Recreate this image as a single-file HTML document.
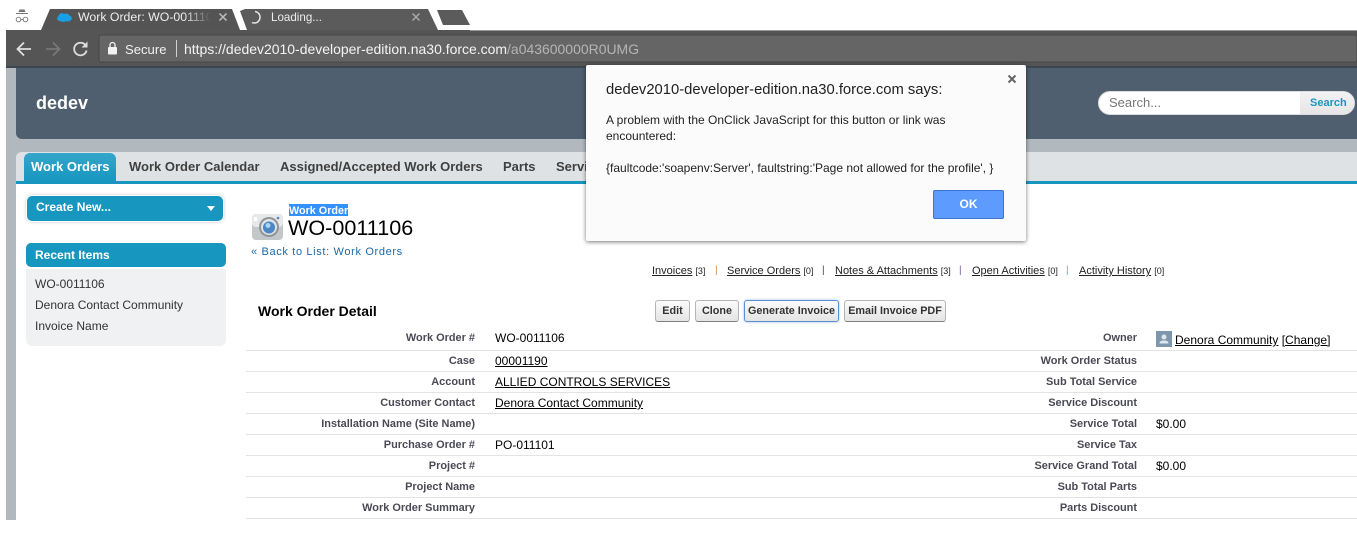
<!DOCTYPE html>
<html lang="en">
<head>
<meta charset="utf-8">
<title>Work Order: WO-0011106</title>
<style>
html,body{margin:0;padding:0;background:#fff}
body{width:1357px;height:540px;overflow:hidden;position:relative;font-family:"Liberation Sans",sans-serif;color:#000}
.a{position:absolute;white-space:nowrap}
.lb{position:absolute;right:882px;font-size:10.950px;font-weight:bold;color:#4a4a56;white-space:nowrap;line-height:14px}
.lb2{position:absolute;right:220px;font-size:10.950px;font-weight:bold;color:#4a4a56;white-space:nowrap;line-height:14px}
.v{position:absolute;font-size:12px;line-height:14px;white-space:nowrap;color:#000}
.v u,.rl u{text-underline-offset:1px}
.ln{position:absolute;left:246px;right:0;height:1px;background:#e3e3e3}
.rl{position:absolute;top:265px;font-size:11px;line-height:13px;color:#222;white-space:nowrap}
.rl small{font-size:9px}
.sep{position:absolute;top:265px;font-size:10px;line-height:12px}
.tab{position:absolute;top:159px;font-size:13px;font-weight:bold;color:#3f3f3f;line-height:16px;white-space:nowrap}
.btn{position:absolute;top:300px;height:22px;box-sizing:border-box;border:1px solid #b5b5b5;border-bottom-color:#7f7f7f;border-radius:3px;background:linear-gradient(#fbfbfb,#e4e4e4);font-size:10.800px;font-weight:bold;color:#333;text-align:center;line-height:21px;white-space:nowrap}
</style>
</head>
<body>
<!-- browser chrome -->
<svg class="a" style="left:0;top:0" width="1357" height="68" viewBox="0 0 1357 68">
  <rect x="6" y="30" width="1351" height="38" fill="#555"/>
  <path d="M41 30L50 9H232L240 30Z" fill="#545454"/>
  <path d="M240 11L245 9H428L438 30H247Z" fill="#5b5b5b"/>
  <path d="M437 10H462L470 25H443Z" fill="#5b5b5b"/>
  <rect x="470" y="30" width="887" height="1" fill="#9a9a9a"/>
  <rect x="99" y="35" width="1258" height="27" rx="2" fill="#656565" stroke="#474747"/>
  <rect x="6" y="66" width="1351" height="2" fill="#3d4650"/>
  <!-- incognito -->
  <path d="M19.500 9.500h5l1 2.500h-7z" fill="#777"/>
  <rect x="16" y="13" width="12" height="1" fill="#777"/>
  <circle cx="18.500" cy="19.500" r="2.300" fill="none" stroke="#777" stroke-width=".9"/>
  <circle cx="25.500" cy="19.500" r="2.300" fill="none" stroke="#777" stroke-width=".9"/>
  <path d="M20.800 19.500h2.400" stroke="#777" stroke-width=".9"/>
  <!-- salesforce cloud -->
  <path d="M60 21c-3 0-3.800-3.800-1.500-4.800.5-3 4-4 5.500-2 2-1.500 5-.6 5.500 1.500 2.800.2 3.300 4.200.5 5-1 .8-3 1.200-4.300.5-1.500 1-4 .8-5.700-.2z" fill="#18a0e5"/>
  <!-- tab close icons -->
  <path d="M219.500 13.500l7 7M226.500 13.500l-7 7" stroke="#bdbdbd" stroke-width="1.500"/>
  <path d="M412.500 13.500l7 7M419.500 13.500l-7 7" stroke="#a8a8a8" stroke-width="1.500"/>
  <!-- spinner -->
  <path d="M255 11.500a5.800 5.800 0 0 1 0 11.500a6 6 0 0 1-3-.5" fill="none" stroke="#e4e4e4" stroke-width="1.500"/>
  <!-- nav -->
  <path d="M31 49H18M24 42.500L17.500 49l6.500 6.500" fill="none" stroke="#e0e0e0" stroke-width="1.800"/>
  <path d="M46 49h13M53 42.500l6.500 6.500-6.500 6.500" fill="none" stroke="#777" stroke-width="1.800"/>
  <path d="M86 46a6.300 6.300 0 1 0 .6 4.500" fill="none" stroke="#dedede" stroke-width="1.800"/>
  <path d="M87.500 41.500v6h-6z" fill="#dedede"/>
  <!-- lock -->
  <rect x="108" y="47" width="9" height="7.500" rx="1" fill="#f2f2f2"/>
  <path d="M110 47v-2a2.500 2.500 0 0 1 5 0v2" fill="none" stroke="#f2f2f2" stroke-width="1.300"/>
  <rect x="176" y="40" width="1" height="17" fill="#cfcfcf"/>
</svg>
<div class="a" style="left:78px;top:9px;width:133px;overflow:hidden;font-size:12.300px;line-height:16px;color:#eee;-webkit-mask-image:linear-gradient(90deg,#000 80%,transparent)">Work Order: WO-0011106</div>
<div class="a" style="left:271px;top:10px;font-size:11.600px;line-height:16px;color:#eee">Loading...</div>
<div class="a" style="left:125px;top:42px;font-size:13.100px;line-height:16px;color:#f0f0f0">Secure</div>
<div class="a" style="left:184px;top:41px;font-size:13.970px;line-height:16px;color:#f4f4f4">https://dedev2010-developer-edition.na30.force.com<span style="color:#b5b5b5">/a043600000R0UMG</span></div>

<!-- page -->
<div class="a" style="left:6px;top:68px;width:1351px;height:452px;background:#b1b8be"></div>
<div class="a" style="left:16px;top:68px;width:1341px;height:71px;background:#4f5f6f;border-radius:0 0 0 6px"></div>
<div class="a" style="left:36px;top:93px;font-size:18px;font-weight:bold;color:#fff;line-height:20px">dedev</div>
<div class="a" style="left:1098px;top:91px;width:257px;height:24px;box-sizing:border-box;background:#fff;border-radius:12px;overflow:hidden;border:1px solid #ddd">
  <div class="a" style="left:10px;top:3px;font-size:13px;line-height:16px;color:#777">Search...</div>
  <div class="a" style="left:201px;top:0;width:55px;height:22px;background:linear-gradient(#f2f2f2,#e6e6e6)"></div>
  <div class="a" style="left:211px;top:4px;font-size:11px;font-weight:bold;line-height:14px;color:#1797c0">Search</div>
</div>
<div class="a" style="left:16px;top:152px;width:1341px;height:368px;background:#fff;border-radius:6px 0 0 0"></div>
<div class="a" style="left:16px;top:152px;width:1341px;height:29px;background:#dfe2e4;border-radius:6px 0 0 0"></div>
<div class="a" style="left:16px;top:181px;width:1341px;height:3px;background:#1797c0"></div>
<div class="a" style="left:24px;top:153px;width:92px;height:28px;background:linear-gradient(#35a5ca,#1797c0);border-radius:6px 6px 0 0"></div>
<div class="tab" style="left:31px;color:#fff">Work Orders</div>
<div class="tab" style="left:129px">Work Order Calendar</div>
<div class="tab" style="left:280px">Assigned/Accepted Work Orders</div>
<div class="tab" style="left:503px">Parts</div>
<div class="tab" style="left:556px">Service</div>

<!-- sidebar -->
<div class="a" style="left:26px;top:195px;width:198px;height:27px;box-sizing:border-box;background:#1797c0;border:1px solid #fff;border-radius:6px;box-shadow:0 0 3px #ccc"></div>
<div class="a" style="left:36px;top:199px;font-size:12px;font-weight:bold;color:#fff;line-height:16px">Create New...</div>
<div class="a" style="left:207px;top:206px;width:0;height:0;border-left:4px solid transparent;border-right:4px solid transparent;border-top:5px solid #fff"></div>
<div class="a" style="left:26px;top:243px;width:200px;height:24px;background:#1797c0;border-radius:5px"></div>
<div class="a" style="left:35px;top:247px;font-size:12px;font-weight:bold;color:#fff;line-height:16px">Recent Items</div>
<div class="a" style="left:26px;top:269px;width:200px;height:77px;background:#f0f1f3;border-radius:0 0 6px 6px"></div>
<div class="a" style="left:35px;top:277px;font-size:12px;line-height:14px;color:#333">WO-0011106</div>
<div class="a" style="left:35px;top:298px;font-size:12px;line-height:14px;color:#333">Denora Contact Community</div>
<div class="a" style="left:35px;top:319px;font-size:12px;line-height:14px;color:#333">Invoice Name</div>

<!-- title -->
<svg class="a" style="left:251px;top:212px" width="34" height="30" viewBox="0 0 34 30">
  <rect x="1" y="2" width="31" height="26" rx="4" fill="#c4c7c9"/>
  <rect x="1" y="2" width="31" height="13" rx="4" fill="#e7e8e9"/>
  <rect x="3" y="5" width="3" height="4" fill="#fff"/>
  <circle cx="18" cy="15" r="10" fill="#8f9598"/>
  <circle cx="18" cy="15" r="8" fill="#dfe3e6"/>
  <circle cx="18" cy="15.500" r="6" fill="#4d86c4"/>
  <circle cx="17" cy="13.500" r="2.500" fill="#a6d4f3"/>
  <circle cx="27" cy="6" r="1.300" fill="#4d86c4"/>
</svg>
<div class="a" style="left:289px;top:204px;width:59px;height:12px;background:#3390ff"></div>
<div class="a" style="left:289px;top:205px;font-size:10.800px;font-weight:bold;line-height:12px;color:#fff">Work Order</div>
<div class="a" style="left:288px;top:215px;font-size:21.600px;line-height:25px;color:#000">WO-0011106</div>
<div class="a" style="left:251px;top:245px;font-size:11px;line-height:14px;color:#1b6aa5;letter-spacing:.65px">« Back to List: Work Orders</div>

<!-- related list links -->
<div class="rl" style="left:652px"><u>Invoices</u> <small>[3]</small></div>
<div class="sep" style="left:715px;color:#c98a3a">|</div>
<div class="rl" style="left:727px"><u>Service Orders</u> <small>[0]</small></div>
<div class="sep" style="left:822px;color:#444">|</div>
<div class="rl" style="left:835px"><u>Notes &amp; Attachments</u> <small>[3]</small></div>
<div class="sep" style="left:959px;color:#7a5aa8">|</div>
<div class="rl" style="left:972px"><u>Open Activities</u> <small>[0]</small></div>
<div class="sep" style="left:1066px;color:#6aa8d8">|</div>
<div class="rl" style="left:1079px"><u>Activity History</u> <small>[0]</small></div>

<!-- detail header -->
<div class="a" style="left:258px;top:303px;font-size:14px;font-weight:bold;line-height:16px">Work Order Detail</div>
<div class="btn" style="left:655px;width:35px">Edit</div>
<div class="btn" style="left:695px;width:44px">Clone</div>
<div class="btn" style="left:744px;width:95px;border:1px solid #5b8fd8;box-shadow:0 0 2px #8db4e8">Generate Invoice</div>
<div class="btn" style="left:844px;width:102px">Email Invoice PDF</div>

<!-- rows -->
<div class="ln" style="top:350px"></div><div class="ln" style="top:371px"></div><div class="ln" style="top:392px"></div>
<div class="ln" style="top:413px"></div><div class="ln" style="top:434px"></div><div class="ln" style="top:455px"></div>
<div class="ln" style="top:476px"></div><div class="ln" style="top:497px"></div><div class="ln" style="top:518px"></div>

<div class="lb" style="top:331px">Work Order #</div>
<div class="lb" style="top:354px">Case</div>
<div class="lb" style="top:375px">Account</div>
<div class="lb" style="top:396px">Customer Contact</div>
<div class="lb" style="top:417px">Installation Name (Site Name)</div>
<div class="lb" style="top:438px">Purchase Order #</div>
<div class="lb" style="top:459px">Project #</div>
<div class="lb" style="top:480px">Project Name</div>
<div class="lb" style="top:501px">Work Order Summary</div>

<div class="v" style="left:495px;top:331px">WO-0011106</div>
<div class="v" style="left:495px;top:354px"><u>00001190</u></div>
<div class="v" style="left:495px;top:375px"><u>ALLIED CONTROLS SERVICES</u></div>
<div class="v" style="left:495px;top:396px"><u>Denora Contact Community</u></div>
<div class="v" style="left:495px;top:438px">PO-011101</div>

<div class="lb2" style="top:331px">Owner</div>
<div class="lb2" style="top:354px">Work Order Status</div>
<div class="lb2" style="top:375px">Sub Total Service</div>
<div class="lb2" style="top:396px">Service Discount</div>
<div class="lb2" style="top:417px">Service Total</div>
<div class="lb2" style="top:438px">Service Tax</div>
<div class="lb2" style="top:459px">Service Grand Total</div>
<div class="lb2" style="top:480px">Sub Total Parts</div>
<div class="lb2" style="top:501px">Parts Discount</div>

<svg class="a" style="left:1156px;top:331px" width="16" height="16" viewBox="0 0 16 16">
  <rect width="16" height="16" fill="#7f97ad"/>
  <circle cx="8" cy="6" r="2.500" fill="#dfe6ec"/>
  <path d="M3.500 12.500c0-2.500 2-3 4.500-3s4.500.5 4.500 3z" fill="#dfe6ec"/>
</svg>
<div class="v" style="left:1175px;top:333px"><u>Denora Community</u> <u>[Change]</u></div>
<div class="v" style="left:1156px;top:417px">$0.00</div>
<div class="v" style="left:1156px;top:459px">$0.00</div>

<!-- dialog -->
<div class="a" style="left:586px;top:65px;width:440px;height:176px;background:#fbfbfb;border-radius:2px;box-shadow:0 1px 4px rgba(0,0,0,.55)"></div>
<svg class="a" style="left:1007px;top:74px" width="10" height="10" viewBox="0 0 10 10"><path d="M1.500 1.500l7 7M8.500 1.500l-7 7" stroke="#666" stroke-width="2"/></svg>
<div class="a" style="left:606px;top:81px;font-size:14.800px;line-height:18px;color:#222">dedev2010-developer-edition.na30.force.com says:</div>
<div class="a" style="left:606px;top:112px;font-size:12px;line-height:16px;color:#222">A problem with the OnClick JavaScript for this button or link was</div>
<div class="a" style="left:606px;top:128px;font-size:12px;line-height:16px;color:#222">encountered:</div>
<div class="a" style="left:606px;top:160px;font-size:12px;line-height:16px;color:#222">{faultcode:'soapenv:Server', faultstring:'Page not allowed for the profile', }</div>
<div class="a" style="left:933px;top:190px;width:71px;height:29px;box-sizing:border-box;background:#5d9bff;border:1px solid #3a73d6;border-radius:2px;color:#fff;font-size:12px;font-weight:bold;text-align:center;line-height:26px">OK</div>
</body>
</html>
